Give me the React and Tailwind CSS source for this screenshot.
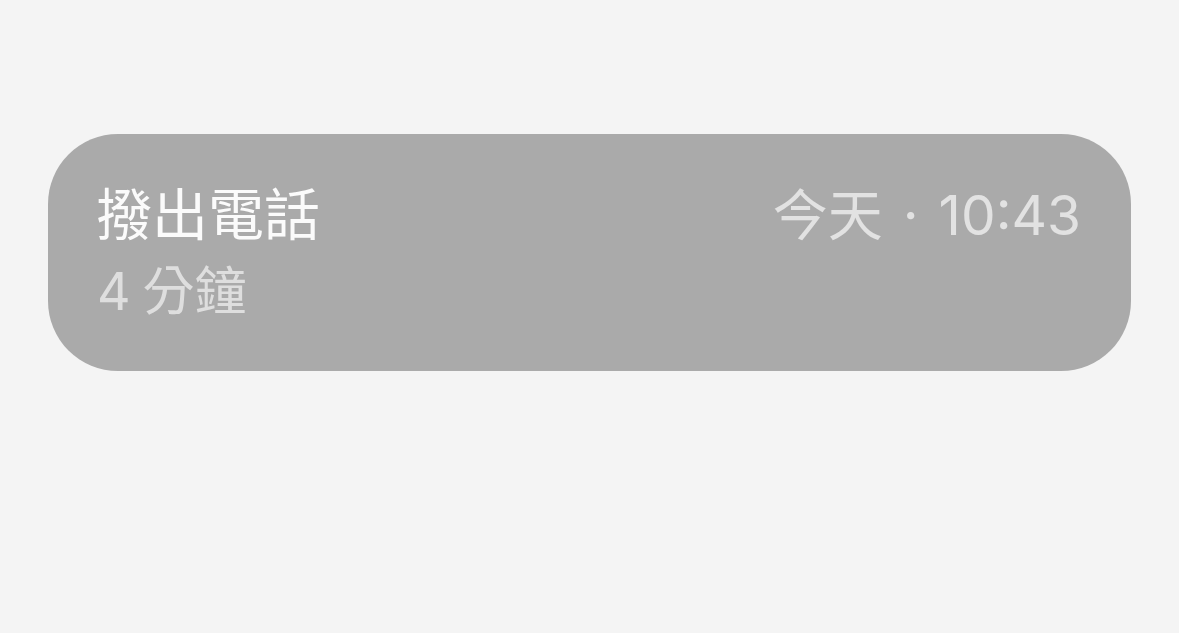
import React from 'react';

const font = { fontFamily: 'Inter, "Noto Sans CJK TC", sans-serif' };

const CallRow = ({ title, duration, when, time }) => (
  <div className="w-full h-[237px] bg-[#aaaaaa] rounded-[70px] pl-[48px] pr-[50px] pt-[50px] flex justify-between items-start">
    <div className="flex flex-col">
      <span className="text-[56px] leading-[62px] text-[#fbfbfb]">{title}</span>
      <span className="mt-[12px] text-[52px] leading-[68px] text-[#dedede] flex items-baseline">
        <span className="mr-[12px] ml-[1px]">{duration[0]}</span>
        <span>{duration[1]}</span>
      </span>
    </div>
    <span className="text-[55px] leading-[62px] text-[#e2e2e2] flex items-baseline">
      <span>{when}</span>
      <span className="mx-[20px]">·</span>
      <span>{time}</span>
    </span>
  </div>
);

export default function App() {
  return (
    <div className="w-[1179px] h-[633px] bg-[#f4f4f4] px-[48px] pt-[134px]" style={font}>
      <CallRow title="撥出電話" duration={['4', '分鐘']} when="今天" time="10:43" />
    </div>
  );
}
